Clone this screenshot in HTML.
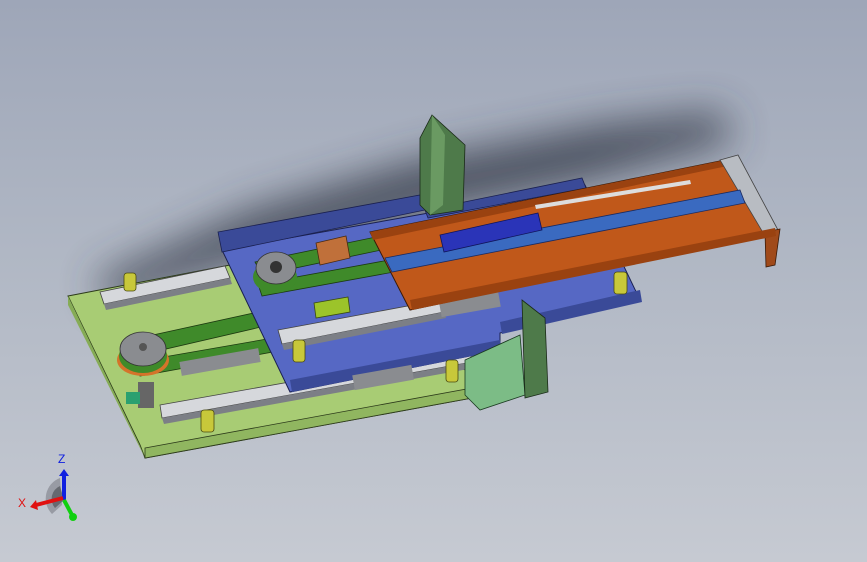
<!DOCTYPE html>
<html><head><meta charset="utf-8"><style>
html,body{margin:0;padding:0;width:867px;height:562px;overflow:hidden}
body{background:linear-gradient(180deg,#9ea6b8 0%,#b0b7c4 45%,#c6cad2 100%)}
svg{display:block}
</style></head><body>
<svg width="867" height="562" viewBox="0 0 867 562" xmlns="http://www.w3.org/2000/svg" font-family="Liberation Sans, sans-serif">
<defs>
<filter id="b" x="-20%" y="-50%" width="140%" height="200%"><feGaussianBlur stdDeviation="20"/></filter>
</defs>
<!-- shadow -->
<path d="M95,280 L250,210 L420,160 L600,125 L720,112 L735,140 L590,180 L420,215 L230,265 L110,305 Z" fill="#363b48" opacity="0.8" filter="url(#b)"/>
<!-- green base plate -->
<polygon points="68,296 230,265 470,372 472,398 145,458 140,445" fill="#a8cc74" stroke="#2c3a1a" stroke-width="1"/>
<polygon points="68,296 140,446 145,458 68,305" fill="#86ac56"/>
<polygon points="145,448 472,388 472,398 145,458" fill="#90b660" stroke="#2c3a1a" stroke-width="0.8"/>
<!-- base rails -->
<polygon points="100,292 225,266 230,278 104,304" fill="#d6d8dc" stroke="#444" stroke-width="0.8"/>
<polygon points="104,304 230,278 232,284 106,310" fill="#7c7f86"/>
<polygon points="160,405 470,350 472,362 162,418" fill="#d6d8dc" stroke="#444" stroke-width="0.8"/>
<polygon points="162,418 472,362 474,368 164,424" fill="#7c7f86"/>
<!-- belts lower -->
<polygon points="130,340 290,305 300,318 140,355" fill="#3f8a2a" stroke="#1c3a10" stroke-width="0.8"/>
<polygon points="135,362 290,335 295,348 140,376" fill="#3f8a2a" stroke="#1c3a10" stroke-width="0.8"/>
<rect x="180" y="355" width="80" height="14" fill="#8a8c90" transform="rotate(-10 220 362)"/>
<!-- lower pulley -->
<ellipse cx="143" cy="360" rx="26" ry="16" fill="#d4742a"/>
<ellipse cx="143" cy="356" rx="24" ry="17" fill="#3f8a2a"/>
<ellipse cx="143" cy="349" rx="23" ry="17" fill="#8a8c90" stroke="#333" stroke-width="0.8"/>
<circle cx="143" cy="347" r="4" fill="#555"/>
<rect x="138" y="382" width="16" height="26" fill="#666"/>
<rect x="126" y="392" width="14" height="12" fill="#2aa070"/>
<!-- blue plate -->
<polygon points="222,250 585,185 640,300 500,333 500,350 290,392" fill="#5668c4" stroke="#1a2050" stroke-width="1"/>
<polygon points="218,232 420,195 425,210 222,252" fill="#3a4a98" stroke="#1a2050" stroke-width="0.8"/>
<polygon points="425,210 582,178 586,188 428,218" fill="#3a4a98" stroke="#1a2050" stroke-width="0.8"/>
<polygon points="290,380 500,340 502,350 292,392" fill="#3a4a98"/>
<polygon points="500,322 640,290 642,302 502,334" fill="#3a4a98"/>
<!-- blue plate rails -->
<polygon points="278,330 440,300 444,312 282,344" fill="#d6d8dc" stroke="#444" stroke-width="0.8"/>
<polygon points="282,344 444,312 446,318 284,350" fill="#7c7f86"/>
<rect x="353" y="370" width="60" height="15" fill="#8a8c90" transform="rotate(-10 383 377)"/>
<rect x="440" y="297" width="60" height="15" fill="#8a8c90" transform="rotate(-10 470 305)"/>
<!-- upper belts -->
<polygon points="255,262 400,232 410,244 262,275" fill="#3f8a2a" stroke="#1c3a10" stroke-width="0.8"/>
<polygon points="258,284 400,258 405,270 262,296" fill="#3f8a2a" stroke="#1c3a10" stroke-width="0.8"/>
<ellipse cx="275" cy="277" rx="22" ry="16" fill="#3f8a2a"/>
<ellipse cx="276" cy="268" rx="20" ry="16" fill="#8a8c90" stroke="#333" stroke-width="0.8"/>
<circle cx="276" cy="267" r="6" fill="#333"/>
<polygon points="316,243 346,236 350,258 320,265" fill="#c0703a" stroke="#4a2a10" stroke-width="0.8"/>
<polygon points="314,303 348,297 350,312 316,318" fill="#9cc42a" stroke="#3a4a10" stroke-width="0.8"/>
<!-- green vertical upper -->
<polygon points="420,138 432,115 465,145 463,210 430,215 420,205" fill="#4e7a4a" stroke="#1a2a18" stroke-width="0.8"/>
<polygon points="432,115 445,135 443,205 430,215" fill="#6a9a62"/>
<!-- orange tray -->
<polygon points="370,232 735,158 775,232 410,310" fill="#c0581a" stroke="#3a1a08" stroke-width="1"/>
<polygon points="370,232 735,158 737,164 373,240" fill="#9a4210"/>
<polygon points="720,160 738,155 778,230 765,236" fill="#b8bcc2" stroke="#444" stroke-width="0.8"/>
<polygon points="765,232 780,229 775,265 766,267" fill="#a04a1a" stroke="#3a1a08" stroke-width="0.8"/>
<polygon points="410,300 775,228 776,236 412,310" fill="#9a4210"/>
<polygon points="385,258 740,190 745,203 392,272" fill="#3a6ac0" stroke="#1a2a60" stroke-width="0.8"/>
<polygon points="440,235 538,213 542,230 444,252" fill="#2a34b8" stroke="#10145a" stroke-width="0.8"/>
<polygon points="535,205 690,180 691,184 536,209" fill="#ddd"/>
<!-- lower green plates -->
<polygon points="465,360 520,335 525,395 480,410 465,395" fill="#7cbc86" stroke="#1a3a20" stroke-width="0.8"/>
<polygon points="522,300 545,318 548,392 525,398" fill="#4e7a4a" stroke="#1a2a18" stroke-width="0.8"/>
<!-- spacers -->
<g fill="#c8c83a" stroke="#4a4a10" stroke-width="0.8">
<rect x="124" y="273" width="12" height="18" rx="3"/>
<rect x="293" y="340" width="12" height="22" rx="3"/>
<rect x="446" y="360" width="12" height="22" rx="3"/>
<rect x="201" y="410" width="13" height="22" rx="3"/>
<rect x="614" y="272" width="13" height="22" rx="3"/>
</g>
<!-- axis triad -->
<path d="M60,478 A22,22 0 0 0 52,514 L62,505 Z" fill="#8d9098" opacity="0.8"/>
<path d="M60,486 A14,14 0 0 0 55,508 L64,500 Z" fill="#5a5d63" opacity="0.8"/>
<line x1="64" y1="500" x2="64" y2="475" stroke="#1020e0" stroke-width="4"/>
<polygon points="59,476 69,476 64,469" fill="#1020e0"/>
<line x1="63" y1="498" x2="36" y2="505" stroke="#e01010" stroke-width="4"/>
<polygon points="36,500 38,510 30,507" fill="#e01010"/>
<line x1="64" y1="500" x2="72" y2="515" stroke="#10d010" stroke-width="4"/>
<circle cx="73" cy="517" r="4" fill="#10d010"/>
<text x="58" y="463" font-size="12" fill="#1020e0">Z</text>
<text x="18" y="507" font-size="12" fill="#e01010">X</text>
</svg>
</body></html>
